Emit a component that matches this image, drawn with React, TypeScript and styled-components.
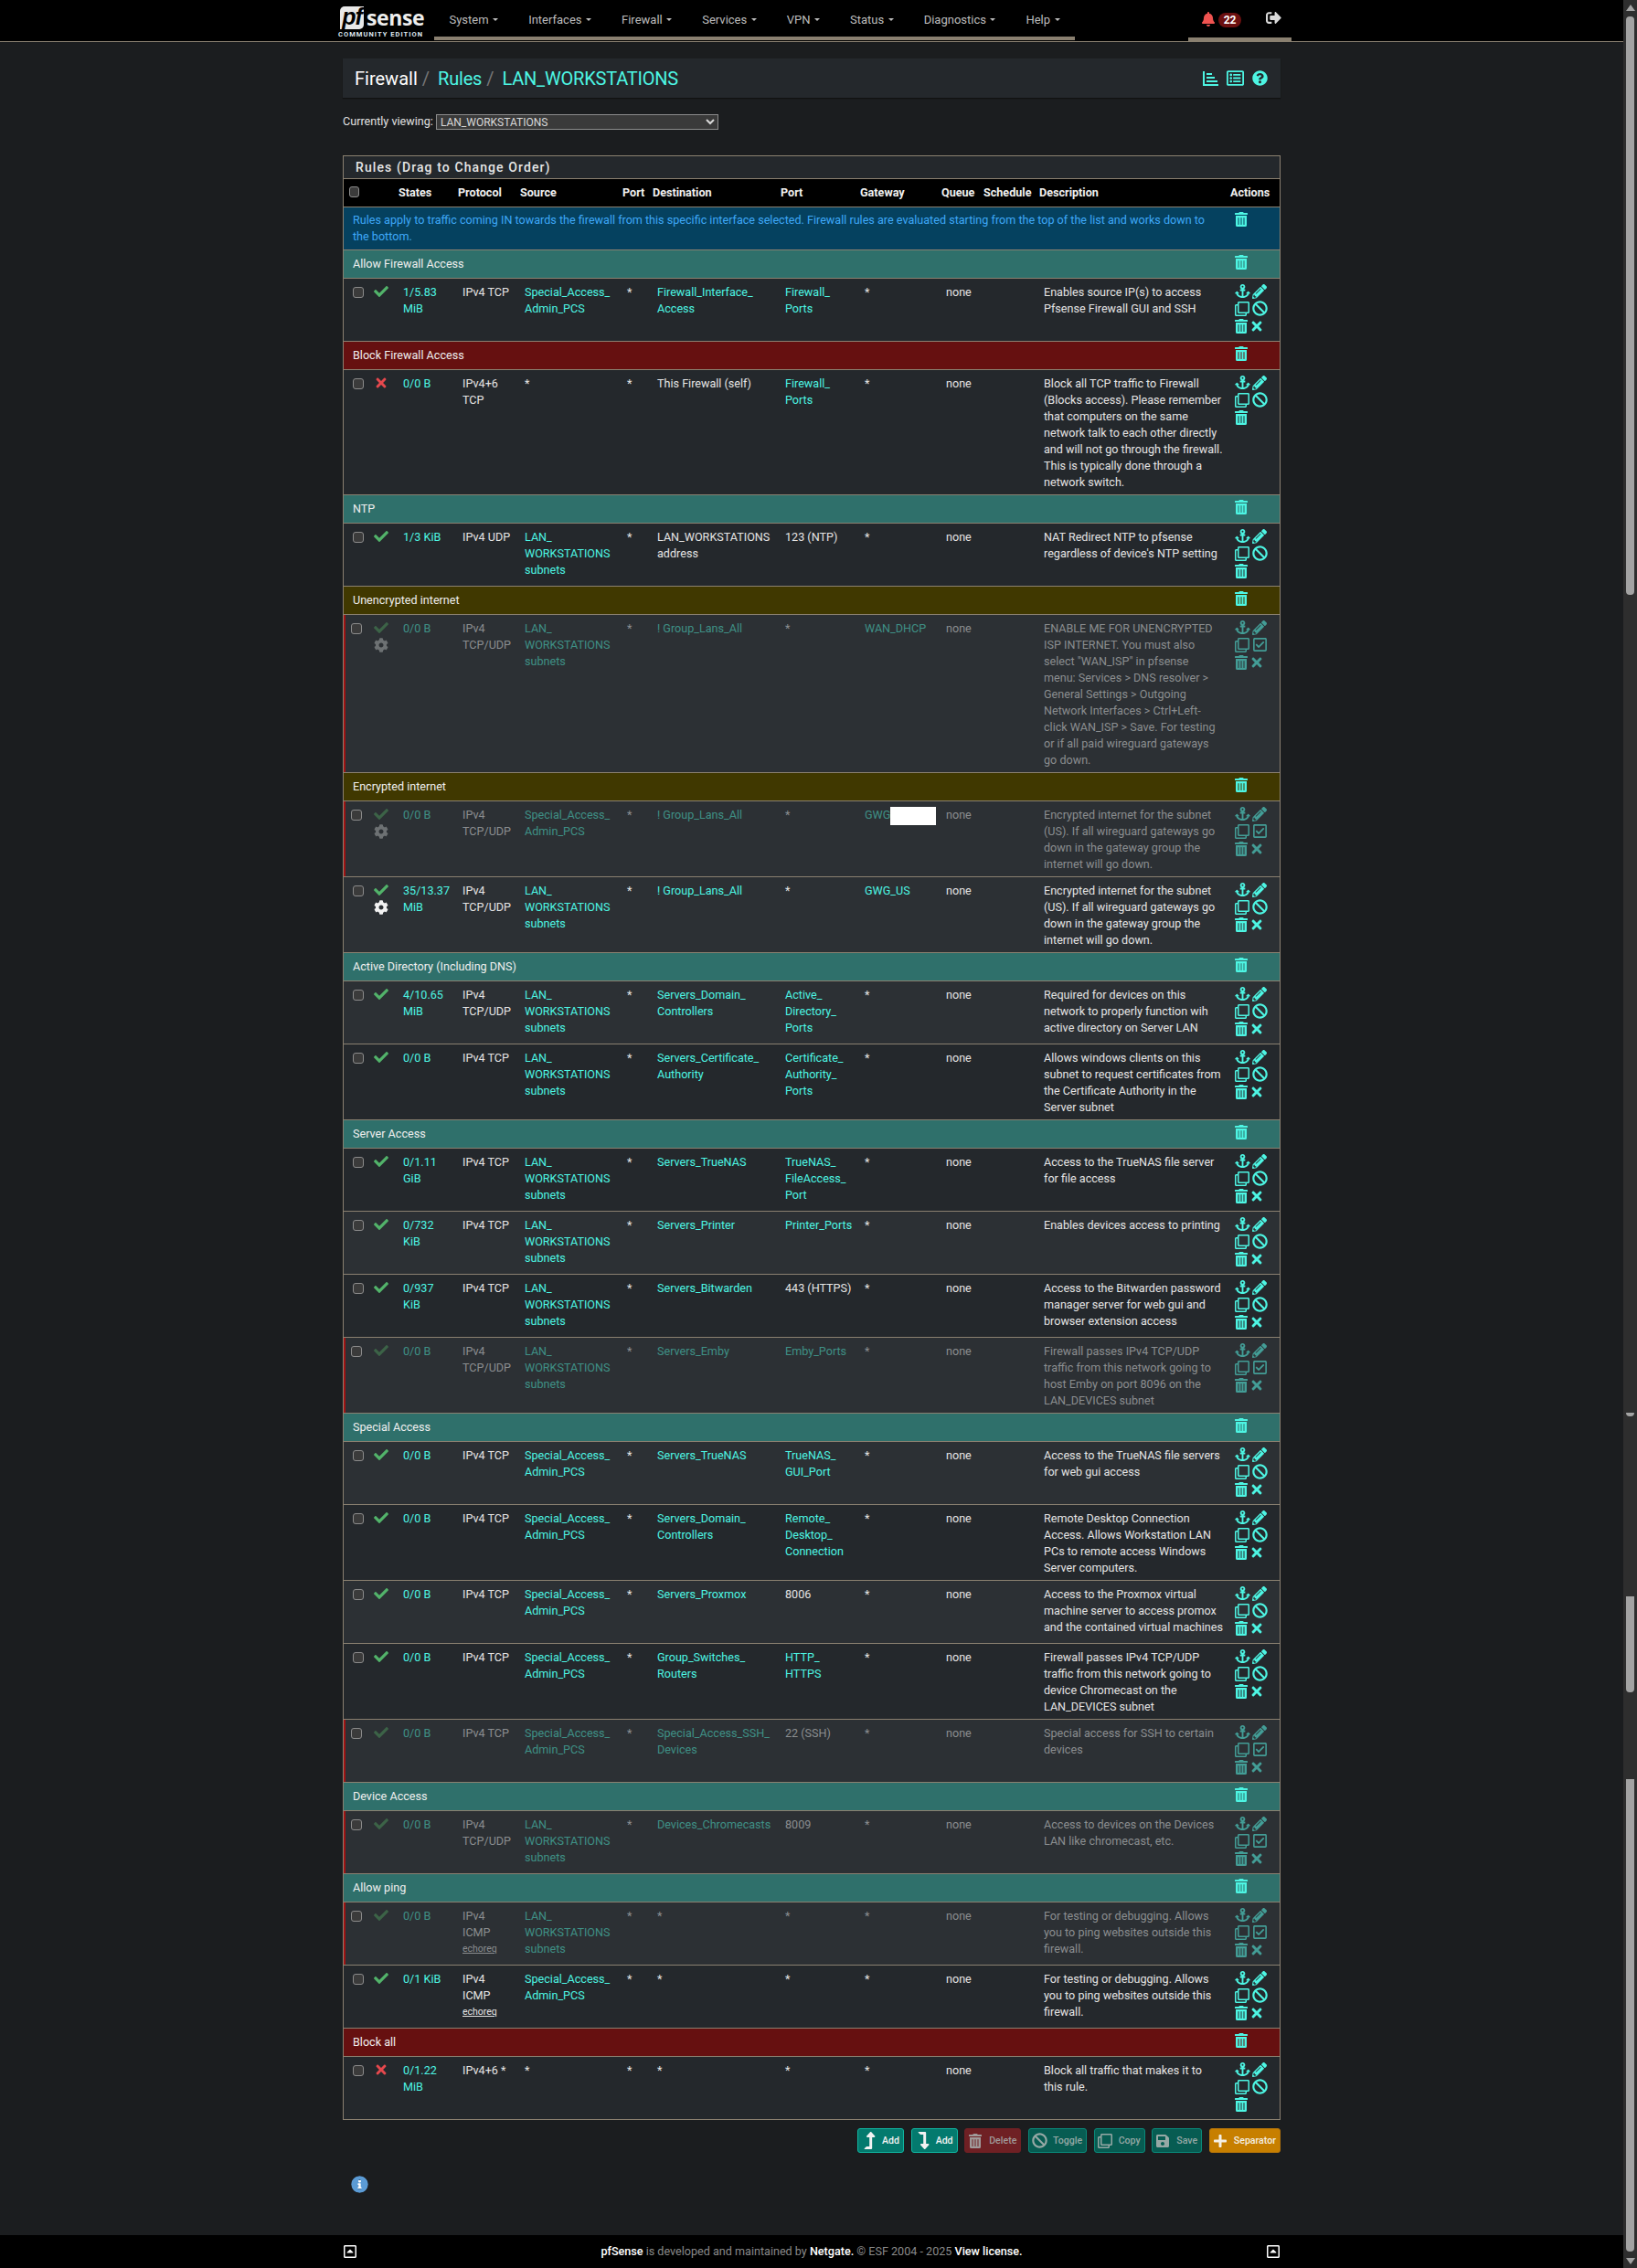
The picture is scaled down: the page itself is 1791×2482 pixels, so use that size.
import React from 'react';
import styled, { createGlobalStyle } from 'styled-components';
import {
  FaAnchor, FaPencilAlt, FaRegClone, FaBan, FaTrashAlt, FaTimes, FaCheck, FaCog, FaRegCheckSquare,
  FaBell, FaSignOutAlt, FaRegListAlt, FaQuestionCircle, FaLevelUpAlt, FaLevelDownAlt, FaSave, FaPlus,
  FaRegCaretSquareUp, FaInfoCircle,
} from 'react-icons/fa';

const TAN = '#8a8070';
const TEAL = '#4df5e3';

const Global = createGlobalStyle`
  html, body { margin: 0; padding: 0; background: #1b1d1f; overflow: hidden; }
  body { font-family: Roboto, "Liberation Sans", sans-serif; font-size: 12.6px; line-height: 18px; color: #e2e2e2; }
`;

const Shell = styled.div`display: flex; width: 1791px; height: 2482px;`;
const Page = styled.div`flex: 1; min-width: 0; display: flex; flex-direction: column;`;

/* scrollbar (stitched capture) */
const Track = styled.div`width: 15px; background: #2e2e2e; display: flex; flex-direction: column; align-items: center;`;
const ArrowUp = styled.div`margin-top: 5px; border: 5px solid transparent; border-top: 0; border-bottom: 7px solid #a3a3a3;`;
const ArrowDown = styled.div`margin-top: 7px; border: 5px solid transparent; border-bottom: 0; border-top: 7px solid #a3a3a3;`;
const Thumb = styled.div<{ $gap: number; $h: number; $top?: boolean }>`
  width: 9px; margin-top: ${p => p.$gap}px; height: ${p => p.$h}px; background: #a3a3a3;
  border-radius: ${p => (p.$top ? '4px 4px' : '0 0')} 4px 4px;
`;

/* navbar */
const Nav = styled.header`height: 45px; background: #000; border-bottom: 1px solid ${TAN}; display: flex; padding-left: 370px; flex: none;`;
const Logo = styled.div`width: 95px; flex: none; display: flex; flex-direction: column; padding-top: 6px; box-sizing: border-box;`;
const LogoTop = styled.div`display: flex; align-items: center; height: 26px; padding-left: 2px;`;
const PfBox = styled.span`
  width: 26px; height: 25px; background: #e8e8e8; border-radius: 5px 0 5px 0; color: #000;
  font: italic bold 25px/23px "Liberation Sans", sans-serif; text-align: center; letter-spacing: -1px;
`;
const Sense = styled.span`font: bold 23px/26px "Open Sans", sans-serif; color: #eee; margin-left: 3px; letter-spacing: -0.4px;`;
const Edition = styled.span`font: bold 7.5px/9px Roboto, sans-serif; color: #dfe8f2; letter-spacing: 1.05px; white-space: nowrap; margin-top: 1px;`;
const Menu = styled.ul`
  list-style: none; margin: 0 0 0 10px; padding: 0; display: flex; height: 40px; border-bottom: 4px solid ${TAN}; flex: none;
`;
const MenuItem = styled.li`
  padding: 3px 16.5px 0; display: flex; align-items: center; gap: 4.5px; color: #bdbdbd; font-size: 13px; white-space: nowrap;
`;
const Caret = styled.i`width: 0; height: 0; border: 3px solid transparent; border-top: 3px solid #bdbdbd; border-bottom: 0;`;
const NavRight = styled.div`
  margin-left: 124px; height: 41px; width: 99px; border-bottom: 4px solid ${TAN}; display: flex; align-items: center;
  padding-left: 14px; color: #ef5350; font-size: 16px;
`;
const Badge = styled.span`
  margin-left: 3px; width: 25px; height: 16px; margin-top: 2px; border-radius: 8px; background: #6c1010; color: #fff; font-weight: 700; font-size: 12px;
  line-height: 16px; text-align: center;
`;
const Logout = styled.span`margin-left: 27px; color: #d9d9d9; display: flex; margin-top: -3px; font-size: 17px;`;

/* page body */
const Main = styled.main`flex: 1; width: 1026px; margin: 0 auto; display: flex; flex-direction: column;`;
const Crumbs = styled.div`
  margin-top: 18px; height: 43px; background: #24282c; display: flex; align-items: center; padding: 0 14px 0 13px; font-size: 20px; color: #fff; box-shadow: 0 1px 1px #111;
`;
const CrumbSep = styled.span`color: #777; margin: 0 9px 0 5px; font-size: 20px;`;
const CrumbLink = styled.span`color: ${TEAL}; letter-spacing: -0.2px;`;
const CrumbIcons = styled.div`margin-left: auto; display: flex; align-items: center; gap: 9px; color: ${TEAL}; font-size: 17px; svg { display: block; }`;
const Viewing = styled.div`margin-top: 17px; display: flex; align-items: center; gap: 3px; height: 18px; color: #e0e0e0;`;
const Select = styled.select`
  width: 309px; height: 17px; padding: 0; background: #3a3a3a; color: #d8d8d8; border: 1px solid #8c8c8c; border-radius: 0;
  font: 12px Roboto, sans-serif; color-scheme: dark;
`;

const Panel = styled.section`margin-top: 28px; border: 1px solid ${TAN}; background: #24282c;`;
const PanelTitle = styled.h2`
  margin: 0; height: 24px; padding-left: 13px; font: 500 14px/24px Roboto, sans-serif; letter-spacing: 1.1px; color: #e6e6e6;
`;
const Table = styled.table`width: 1024px; table-layout: fixed; border-collapse: collapse;`;
const Th = styled.th`
  background: #000; color: #f0f0f0; font-weight: 700; font-size: 12.6px; text-align: left; padding: 0; height: 30px; border-top: 1px solid ${TAN}; border-bottom: 1px solid ${TAN};
  white-space: nowrap;
`;
const Check = styled.input.attrs({ type: 'checkbox' })`
  appearance: none; margin: 0; display: block; width: 12px; height: 12px; box-sizing: border-box; background: #3b3b3b; border: 1px solid #8b8b8b; border-radius: 3px;
`;
const HeadCheck = styled(Check)`margin: -2px 0 0 6px; width: 11px;`;

const Trash = styled(FaTrashAlt)`margin-left: -1px;`;
const InfoRow = styled.tr`background: #05415f; color: #3ea8f8;`;
const InfoCell = styled.td`padding: 5px 0 5px 10px; white-space: pre-line; vertical-align: top;`;
const SepRow = styled.tr<{ $c: string }>`background: ${p => p.$c}; color: #efefef;`;
const SepCell = styled.td`padding: 6px 0 6px 10px; height: 18px; border-top: 1px solid ${TAN}; vertical-align: top;`;
const TrashCell = styled.td`padding: 5px 0 0 5px; color: ${TEAL}; font-size: 16px; border-top: 1px solid ${TAN}; vertical-align: top; svg { display: block; }`;
const InfoTrashCell = styled(TrashCell)`border-top: 0;`;

const Row = styled.tr<{ $off: boolean }>`
  background: ${p => (p.$off ? '#2c3034' : '#24282c')};
  &:nth-child(even) { background: #2c3034; }
  color: ${p => (p.$off ? '#8b8e90' : '#e4e4e4')};
  --link: ${p => (p.$off ? '#3f9086' : TEAL)};
  --icon: ${p => (p.$off ? '#439d96' : TEAL)};
`;
const Td = styled.td`
  border-top: 1px solid ${TAN}; padding: 6px 0 4px 5px; vertical-align: top; white-space: pre-line; overflow: visible;
`;
const Val = styled.span<{ $link: boolean }>`color: ${p => (p.$link ? 'var(--link)' : 'inherit')};`;
const Echo = styled.u`font-size: 10.5px; display: block;`;
const Redacted = styled.i`display: inline-block; width: 50px; height: 20px; background: #fff; vertical-align: middle; margin: -2px 0;`;

const CheckCell = styled.td<{ $off: boolean }>`
  border-top: 1px solid ${TAN}; padding: 9px 0 0 ${p => (p.$off ? 8 : 10)}px; vertical-align: top;
  box-shadow: ${p => (p.$off ? 'inset 2px 0 #a01414' : 'none')};
`;
const StatusCell = styled(Td)`padding: 6px 0 0 4px; svg { display: block; }`;
const StatusIcon = styled.span<{ $c: string; $gap?: number }>`
  display: block; color: ${p => p.$c}; font-size: 16px; margin-top: ${p => p.$gap ?? 0}px;
`;
const Actions = styled.div`
  display: grid; grid-template-columns: 19px 19px; grid-auto-rows: 19.3px; min-height: 58px; margin: -2px 0 2px; color: var(--icon); font-size: 16px; align-items: center; svg { display: block; }
`;
const CloseIcon = styled(FaTimes)`margin-left: -3px;`;

const Toolbar = styled.div`margin-top: 9px; display: flex; justify-content: flex-end; gap: 7.6px;`;
const Btn = styled.button<{ $bg: string; $bd: string; $fg: string }>`
  height: 27px; padding: 0 4px 0 3px; display: flex; align-items: center; box-sizing: border-box;
  background: ${p => p.$bg}; border: 1px solid ${p => p.$bd}; color: ${p => p.$fg}; border-radius: 3px;
  font: 500 10.6px Roboto, sans-serif;
`;
const BtnIcon = styled.span<{ $size?: number }>`width: 23px; display: flex; font-size: ${p => p.$size ?? 16}px;`;
const Info = styled.div`margin: 25px 0 0 9px; color: #5b9bd5; font-size: 19px; height: 19px; svg { display: block; background: radial-gradient(circle, #fff 0 35%, transparent 36%); border-radius: 50%; }`;

const Footer = styled.footer`height: 36px; background: #000; flex: none; color: #8a8a8a;`;
const FooterInner = styled.div`width: 1026px; height: 100%; margin: 0 auto; display: flex; align-items: center; justify-content: space-between; font-size: 16px; color: #fff; svg { display: block; }`;
const FooterText = styled.span`font-size: 12.6px; color: #8a8a8a;`;
const Em = styled.span`color: #fff; font-weight: 500;`;

type Sep = { sep: string; c: string };
type Rule = {
  st: string; proto: string; src: string; dst: string; dport: string; gw: string; desc: string;
  off?: boolean; gear?: boolean; block?: boolean; noX?: boolean; echo?: boolean;
};
const TEALS = '#2f706b', RED = '#661010', YEL = '#403800';
const LAN = 'LAN_\nWORKSTATIONS\nsubnets';
const SP = 'Special_Access_\nAdmin_PCS';
const T4 = 'IPv4\nTCP/UDP';
const ENC = 'Encrypted internet for the subnet\n(US). If all wireguard gateways go\ndown in the gateway group the\ninternet will go down.';
const EMBY = 'Firewall passes IPv4 TCP/UDP\ntraffic from this network going to\n';
const PING = 'For testing or debugging. Allows\nyou to ping websites outside this\nfirewall.';

const items: (Sep | Rule)[] = [
  { sep: 'Allow Firewall Access', c: TEALS },
  { st: '1/5.83\nMiB', proto: 'IPv4 TCP', src: SP, dst: 'Firewall_Interface_\nAccess', dport: 'Firewall_\nPorts', gw: '*', desc: 'Enables source IP(s) to access\nPfsense Firewall GUI and SSH' },
  { sep: 'Block Firewall Access', c: RED },
  { st: '0/0 B', proto: 'IPv4+6\nTCP', src: '*', dst: 'This Firewall (self)', dport: 'Firewall_\nPorts', gw: '*', block: true, noX: true, desc: 'Block all TCP traffic to Firewall\n(Blocks access). Please remember\nthat computers on the same\nnetwork talk to each other directly\nand will not go through the firewall.\nThis is typically done through a\nnetwork switch.' },
  { sep: 'NTP', c: TEALS },
  { st: '1/3 KiB', proto: 'IPv4 UDP', src: LAN, dst: 'LAN_WORKSTATIONS\naddress', dport: '123 (NTP)', gw: '*', noX: true, desc: "NAT Redirect NTP to pfsense\nregardless of device's NTP setting" },
  { sep: 'Unencrypted internet', c: YEL },
  { st: '0/0 B', proto: T4, src: LAN, dst: '! Group_Lans_All', dport: '*', gw: 'WAN_DHCP', off: true, gear: true, desc: 'ENABLE ME FOR UNENCRYPTED\nISP INTERNET. You must also\nselect "WAN_ISP" in pfsense\nmenu: Services > DNS resolver >\nGeneral Settings > Outgoing\nNetwork Interfaces > Ctrl+Left-\nclick WAN_ISP > Save. For testing\nor if all paid wireguard gateways\ngo down.' },
  { sep: 'Encrypted internet', c: YEL },
  { st: '0/0 B', proto: T4, src: SP, dst: '! Group_Lans_All', dport: '*', gw: 'GWG', off: true, gear: true, desc: ENC },
  { st: '35/13.37\nMiB', proto: T4, src: LAN, dst: '! Group_Lans_All', dport: '*', gw: 'GWG_US', gear: true, desc: ENC },
  { sep: 'Active Directory (Including DNS)', c: TEALS },
  { st: '4/10.65\nMiB', proto: T4, src: LAN, dst: 'Servers_Domain_\nControllers', dport: 'Active_\nDirectory_\nPorts', gw: '*', desc: 'Required for devices on this\nnetwork to properly function wih\nactive directory on Server LAN' },
  { st: '0/0 B', proto: 'IPv4 TCP', src: LAN, dst: 'Servers_Certificate_\nAuthority', dport: 'Certificate_\nAuthority_\nPorts', gw: '*', desc: 'Allows windows clients on this\nsubnet to request certificates from\nthe Certificate Authority in the\nServer subnet' },
  { sep: 'Server Access', c: TEALS },
  { st: '0/1.11\nGiB', proto: 'IPv4 TCP', src: LAN, dst: 'Servers_TrueNAS', dport: 'TrueNAS_\nFileAccess_\nPort', gw: '*', desc: 'Access to the TrueNAS file server\nfor file access' },
  { st: '0/732\nKiB', proto: 'IPv4 TCP', src: LAN, dst: 'Servers_Printer', dport: 'Printer_Ports', gw: '*', desc: 'Enables devices access to printing' },
  { st: '0/937\nKiB', proto: 'IPv4 TCP', src: LAN, dst: 'Servers_Bitwarden', dport: '443 (HTTPS)', gw: '*', desc: 'Access to the Bitwarden password\nmanager server for web gui and\nbrowser extension access' },
  { st: '0/0 B', proto: T4, src: LAN, dst: 'Servers_Emby', dport: 'Emby_Ports', gw: '*', off: true, desc: EMBY + 'host Emby on port 8096 on the\nLAN_DEVICES subnet' },
  { sep: 'Special Access', c: TEALS },
  { st: '0/0 B', proto: 'IPv4 TCP', src: SP, dst: 'Servers_TrueNAS', dport: 'TrueNAS_\nGUI_Port', gw: '*', desc: 'Access to the TrueNAS file servers\nfor web gui access' },
  { st: '0/0 B', proto: 'IPv4 TCP', src: SP, dst: 'Servers_Domain_\nControllers', dport: 'Remote_\nDesktop_\nConnection', gw: '*', desc: 'Remote Desktop Connection\nAccess. Allows Workstation LAN\nPCs to remote access Windows\nServer computers.' },
  { st: '0/0 B', proto: 'IPv4 TCP', src: SP, dst: 'Servers_Proxmox', dport: '8006', gw: '*', desc: 'Access to the Proxmox virtual\nmachine server to access promox\nand the contained virtual machines' },
  { st: '0/0 B', proto: 'IPv4 TCP', src: SP, dst: 'Group_Switches_\nRouters', dport: 'HTTP_\nHTTPS', gw: '*', desc: EMBY + 'device Chromecast on the\nLAN_DEVICES subnet' },
  { st: '0/0 B', proto: 'IPv4 TCP', src: SP, dst: 'Special_Access_SSH_\nDevices', dport: '22 (SSH)', gw: '*', off: true, desc: 'Special access for SSH to certain\ndevices' },
  { sep: 'Device Access', c: TEALS },
  { st: '0/0 B', proto: T4, src: LAN, dst: 'Devices_Chromecasts', dport: '8009', gw: '*', off: true, desc: 'Access to devices on the Devices\nLAN like chromecast, etc.' },
  { sep: 'Allow ping', c: TEALS },
  { st: '0/0 B', proto: 'IPv4\nICMP', echo: true, src: LAN, dst: '*', dport: '*', gw: '*', off: true, desc: PING },
  { st: '0/1 KiB', proto: 'IPv4\nICMP', echo: true, src: SP, dst: '*', dport: '*', gw: '*', desc: PING },
  { sep: 'Block all', c: RED },
  { st: '0/1.22\nMiB', proto: 'IPv4+6 *', src: '*', dst: '*', dport: '*', gw: '*', block: true, noX: true, desc: 'Block all traffic that makes it to\nthis rule.' },
];

const isLink = (v: string) => v.includes('_') && !v.endsWith('address');
const COLS = [29, 31, 65, 68, 112, 33, 140, 87, 89, 46, 61, 209, 54];
const NAV = ['System', 'Interfaces', 'Firewall', 'Services', 'VPN', 'Status', 'Diagnostics', 'Help'];
const HEAD = ['States', 'Protocol', 'Source', 'Port', 'Destination', 'Port', 'Gateway', 'Queue', 'Schedule', 'Description', 'Actions'];

const ChartIcon = () => (
  <svg width="17" height="16" viewBox="0 0 17 16" fill="currentColor">
    <rect x="0" y="0" width="2" height="16" /><rect x="0" y="14" width="17" height="2" />
    <rect x="4" y="2" width="6" height="2" /><rect x="4" y="6" width="9" height="2" /><rect x="4" y="10" width="12" height="2" />
  </svg>
);

const RuleRow = ({ r }: { r: Rule }) => (
  <Row $off={!!r.off}>
    <CheckCell $off={!!r.off}><Check readOnly /></CheckCell>
    <StatusCell>
      <StatusIcon $c={r.block ? '#e5484d' : r.off ? '#3c6347' : '#52b36a'}>{r.block ? <FaTimes /> : <FaCheck />}</StatusIcon>
      {r.gear && <StatusIcon $c={r.off ? '#6d7173' : '#f2f2f2'} $gap={3}><FaCog /></StatusIcon>}
    </StatusCell>
    <Td><Val $link>{r.st}</Val></Td>
    <Td>{r.proto}{r.echo && <Echo>echoreq</Echo>}</Td>
    <Td><Val $link={isLink(r.src)}>{r.src}</Val></Td>
    <Td>*</Td>
    <Td><Val $link={isLink(r.dst) || r.dst.startsWith('!')}>{r.dst}</Val></Td>
    <Td><Val $link={isLink(r.dport)}>{r.dport}</Val></Td>
    <Td><Val $link={isLink(r.gw) || r.gw === 'GWG'}>{r.gw}</Val>{r.gw === 'GWG' && <Redacted />}</Td>
    <Td>none</Td>
    <Td />
    <Td>{r.desc}</Td>
    <Td>
      <Actions>
        <FaAnchor size={17} /><FaPencilAlt />
        <FaRegClone />{r.off ? <FaRegCheckSquare size={17} /> : <FaBan size={17} />}
        <Trash />{!r.noX && <CloseIcon />}
      </Actions>
    </Td>
  </Row>
);

export default function App() {
  return (
    <Shell>
      <Global />
      <Page>
        <Nav>
          <Logo>
            <LogoTop><PfBox>pf</PfBox><Sense>sense</Sense></LogoTop>
            <Edition>COMMUNITY EDITION</Edition>
          </Logo>
          <Menu>
            {NAV.map(n => <MenuItem key={n}>{n}<Caret /></MenuItem>)}
          </Menu>
          <NavRight>
            <FaBell /><Badge>22</Badge>
            <Logout><FaSignOutAlt /></Logout>
          </NavRight>
        </Nav>
        <Main>
          <Crumbs>
            Firewall<CrumbSep>/</CrumbSep><CrumbLink>Rules</CrumbLink><CrumbSep>/</CrumbSep><CrumbLink>LAN_WORKSTATIONS</CrumbLink>
            <CrumbIcons><ChartIcon /><FaRegListAlt size={19} /><FaQuestionCircle size={17} /></CrumbIcons>
          </Crumbs>
          <Viewing>
            Currently viewing:
            <Select defaultValue="LAN_WORKSTATIONS"><option>LAN_WORKSTATIONS</option></Select>
          </Viewing>
          <Panel>
            <PanelTitle>Rules (Drag to Change Order)</PanelTitle>
            <Table>
              <colgroup>{COLS.map((w, i) => <col key={i} width={w} />)}</colgroup>
              <thead>
                <tr>
                  <Th><HeadCheck readOnly /></Th>
                  <Th />
                  {HEAD.map((h, i) => <Th key={i}>{h}</Th>)}
                </tr>
              </thead>
              <tbody>
                <InfoRow>
                  <InfoCell colSpan={12}>{'Rules apply to traffic coming IN towards the firewall from this specific interface selected. Firewall rules are evaluated starting from the top of the list and works down to\nthe bottom.'}</InfoCell>
                  <InfoTrashCell><Trash /></InfoTrashCell>
                </InfoRow>
                {items.map((it, i) => 'sep' in it ? (
                  <SepRow key={i} $c={it.c}>
                    <SepCell colSpan={12}>{it.sep}</SepCell>
                    <TrashCell><Trash /></TrashCell>
                  </SepRow>
                ) : <RuleRow key={i} r={it} />)}
              </tbody>
            </Table>
          </Panel>
          <Toolbar>
            <Btn $bg="#047a6e" $bd="#10b5a0" $fg="#f2f2f2"><BtnIcon $size={19}><FaLevelUpAlt /></BtnIcon>Add</Btn>
            <Btn $bg="#047a6e" $bd="#10b5a0" $fg="#f2f2f2"><BtnIcon $size={19}><FaLevelDownAlt /></BtnIcon>Add</Btn>
            <Btn $bg="#6f2024" $bd="#6f2024" $fg="#a09a9a"><BtnIcon><FaTrashAlt /></BtnIcon>Delete</Btn>
            <Btn $bg="#075c52" $bd="#098a7a" $fg="#96a8a5"><BtnIcon $size={17}><FaBan /></BtnIcon>Toggle</Btn>
            <Btn $bg="#075c52" $bd="#098a7a" $fg="#96a8a5"><BtnIcon><FaRegClone /></BtnIcon>Copy</Btn>
            <Btn $bg="#075c52" $bd="#098a7a" $fg="#96a8a5"><BtnIcon><FaSave /></BtnIcon>Save</Btn>
            <Btn $bg="#c77f00" $bd="#b5740a" $fg="#f4f0e6"><BtnIcon><FaPlus /></BtnIcon>Separator</Btn>
          </Toolbar>
          <Info><FaInfoCircle /></Info>
        </Main>
        <Footer>
          <FooterInner>
            <FaRegCaretSquareUp />
            <FooterText><Em>pfSense</Em> is developed and maintained by <Em>Netgate.</Em> © ESF 2004 - 2025 <Em>View license.</Em></FooterText>
            <FaRegCaretSquareUp />
          </FooterInner>
        </Footer>
      </Page>
      <Track>
        <ArrowUp />
        <Thumb $gap={6} $h={633} $top />
        <Thumb $gap={895} $h={4} />
        <Thumb $gap={197} $h={105} />
        <Thumb $gap={95} $h={517} />
        <ArrowDown />
      </Track>
    </Shell>
  );
}
